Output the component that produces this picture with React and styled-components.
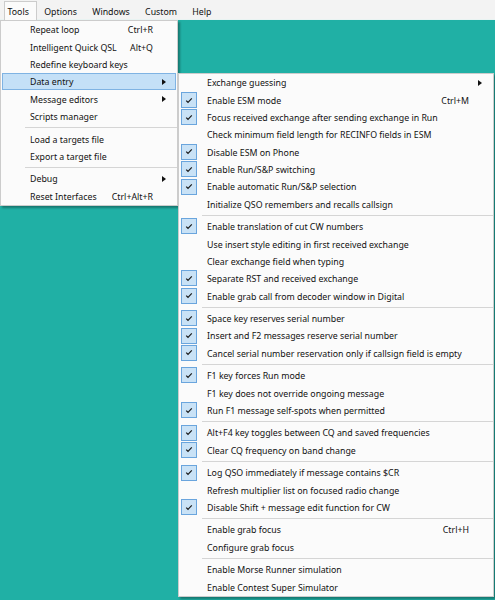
import React from "react";
import styled, { createGlobalStyle, css } from "styled-components";

const GlobalStyle = createGlobalStyle`
  html, body {
    margin: 0;
    padding: 0;
  }
  body {
    font-family: "Noto Sans", "Open Sans", sans-serif;
    color: #111;
  }
`;

const topMenus = ["Tools", "Options", "Windows", "Custom", "Help"];

const toolsItems = [
  { label: "Repeat loop", shortcut: "Ctrl+R" },
  { label: "Intelligent Quick QSL", shortcut: "Alt+Q" },
  { label: "Redefine keyboard keys" },
  { label: "Data entry", sub: true, active: true },
  { label: "Message editors", sub: true },
  { label: "Scripts manager" },
  { sep: true },
  { label: "Load a targets file" },
  { label: "Export a target file" },
  { sep: true },
  { label: "Debug", sub: true },
  { label: "Reset Interfaces", shortcut: "Ctrl+Alt+R" },
];

const dataEntryItems = [
  { label: "Exchange guessing", sub: true },
  { label: "Enable ESM mode", checked: true, shortcut: "Ctrl+M" },
  { label: "Focus received exchange after sending exchange in Run", checked: true },
  { label: "Check minimum field length for RECINFO fields in ESM" },
  { label: "Disable ESM on Phone", checked: true },
  { label: "Enable Run/S&P switching", checked: true },
  { label: "Enable automatic Run/S&P selection", checked: true },
  { label: "Initialize QSO remembers and recalls callsign" },
  { sep: true },
  { label: "Enable translation of cut CW numbers", checked: true },
  { label: "Use insert style editing in first received exchange" },
  { label: "Clear exchange field when typing" },
  { label: "Separate RST and received exchange", checked: true },
  { label: "Enable grab call from decoder window in Digital", checked: true },
  { sep: true },
  { label: "Space key reserves serial number", checked: true },
  { label: "Insert and F2 messages reserve serial number", checked: true },
  { label: "Cancel serial number reservation only if callsign field is empty", checked: true },
  { sep: true },
  { label: "F1 key forces Run mode", checked: true },
  { label: "F1 key does not override ongoing message" },
  { label: "Run F1 message self-spots when permitted", checked: true },
  { sep: true },
  { label: "Alt+F4 key toggles between CQ and saved frequencies", checked: true },
  { label: "Clear CQ frequency on band change", checked: true },
  { sep: true },
  { label: "Log QSO immediately if message contains $CR", checked: true },
  { label: "Refresh multiplier list on focused radio change" },
  { label: "Disable Shift + message edit function for CW", checked: true },
  { sep: true },
  { label: "Enable grab focus", shortcut: "Ctrl+H" },
  { label: "Configure grab focus" },
  { sep: true },
  { label: "Enable Morse Runner simulation" },
  { label: "Enable Contest Super Simulator" },
];

const Window = styled.div`
  position: relative;
  width: 495px;
  height: 600px;
  overflow: hidden;
  display: flex;
  flex-direction: column;
  font-size: 8.8px;
`;

const MenuBar = styled.div`
  height: 20px;
  flex: none;
  display: flex;
  align-items: stretch;
  padding-left: 4px;
  background: #f3f3f3;
  border-bottom: 1px solid #e9f3f2;
  box-sizing: border-box;
`;

const MenuTitle = styled.div`
  display: flex;
  align-items: center;
  padding: 2px 6.8px 0 2.5px;
  margin-right: 4px;
  margin-top: 1px;
  border: 1px solid transparent;
  border-bottom: none;
  ${({ $open }) =>
    $open &&
    css`
      background: #fbfbfb;
      border-color: #cccccc;
      position: relative;
      z-index: 3;
      margin-bottom: -1px;
    `}
`;

const Desktop = styled.div`
  flex: 1;
  background: #20b0a5;
`;

const Dropdown = styled.div`
  position: absolute;
  left: ${({ $left }) => $left}px;
  top: ${({ $top }) => $top}px;
  width: ${({ $width }) => $width}px;
  box-sizing: border-box;
  background: #fbfbfb;
  border: 1px solid #cccccc;
  box-shadow: 2px 2px 2px rgba(0, 0, 0, 0.32);
  z-index: ${({ $z }) => $z};
`;

const Item = styled.div`
  display: flex;
  align-items: center;
  height: 17.33px;
  box-sizing: border-box;
  margin: 0 1px;
  border: 1px solid transparent;
  white-space: nowrap;
  ${({ $active }) =>
    $active &&
    css`
      background: #c4e0f7;
      border-color: #7fb3e3;
    `}
`;

const Gutter = styled.div`
  width: ${({ $w }) => $w}px;
  flex: none;
  display: flex;
  align-items: center;
  height: 100%;
`;

const CheckBox = styled.div`
  width: 16px;
  height: 16px;
  box-sizing: border-box;
  background: #c9e2f6;
  border: 1px solid #6aa5dd;
  display: flex;
  align-items: center;
  justify-content: center;
`;

const Label = styled.span`
  flex: 1;
  line-height: 1;
  padding-top: 2.4px;
`;

const Shortcut = styled.span`
  flex: none;
  line-height: 1;
  padding-top: 2.4px;
`;

const ArrowCell = styled.div`
  width: ${({ $w }) => $w}px;
  flex: none;
  display: flex;
  align-items: center;
  justify-content: center;
`;

const Arrow = styled.span`
  width: 0;
  height: 0;
  margin-top: 1px;
  border-top: 3.5px solid transparent;
  border-bottom: 3.5px solid transparent;
  border-left: 4px solid #111;
`;

const Separator = styled.div`
  height: 5.2px;
  display: flex;
  align-items: center;
  padding-left: ${({ $inset }) => $inset}px;

  &::after {
    content: "";
    flex: 1;
    height: 1px;
    background: #d5d5d5;
  }
`;

const Check = () => (
  <svg width="8" height="7" viewBox="0 0 8 7">
    <path d="M1.2 3.6 L3 5.3 L6.8 1.4" fill="none" stroke="#1a1a1a" strokeWidth="1.2" />
  </svg>
);

const MenuList = ({ items, gutter, inset, right, checks }) =>
  items.map((it, i) =>
    it.sep ? (
      <Separator key={i} $inset={inset} />
    ) : (
      <Item key={i} $active={it.active}>
        <Gutter $w={gutter}>
          {checks && it.checked && (
            <CheckBox>
              <Check />
            </CheckBox>
          )}
        </Gutter>
        <Label>{it.label}</Label>
        {it.shortcut && <Shortcut>{it.shortcut}</Shortcut>}
        <ArrowCell $w={right}>{it.sub && <Arrow />}</ArrowCell>
      </Item>
    )
  );

export default function App() {
  return (
    <>
      <GlobalStyle />
      <Window>
        <MenuBar>
          {topMenus.map((m) => (
            <MenuTitle key={m} $open={m === "Tools"}>
              {m}
            </MenuTitle>
          ))}
        </MenuBar>
        <Desktop />

        <Dropdown $left={0} $top={20} $width={178} $z={2}>
          <MenuList items={toolsItems} gutter={27} inset={24} right={22} />
        </Dropdown>

        <Dropdown $left={178} $top={73} $width={316} $z={4}>
          <MenuList items={dataEntryItems} gutter={26} inset={23} right={22} checks />
        </Dropdown>
      </Window>
    </>
  );
}
